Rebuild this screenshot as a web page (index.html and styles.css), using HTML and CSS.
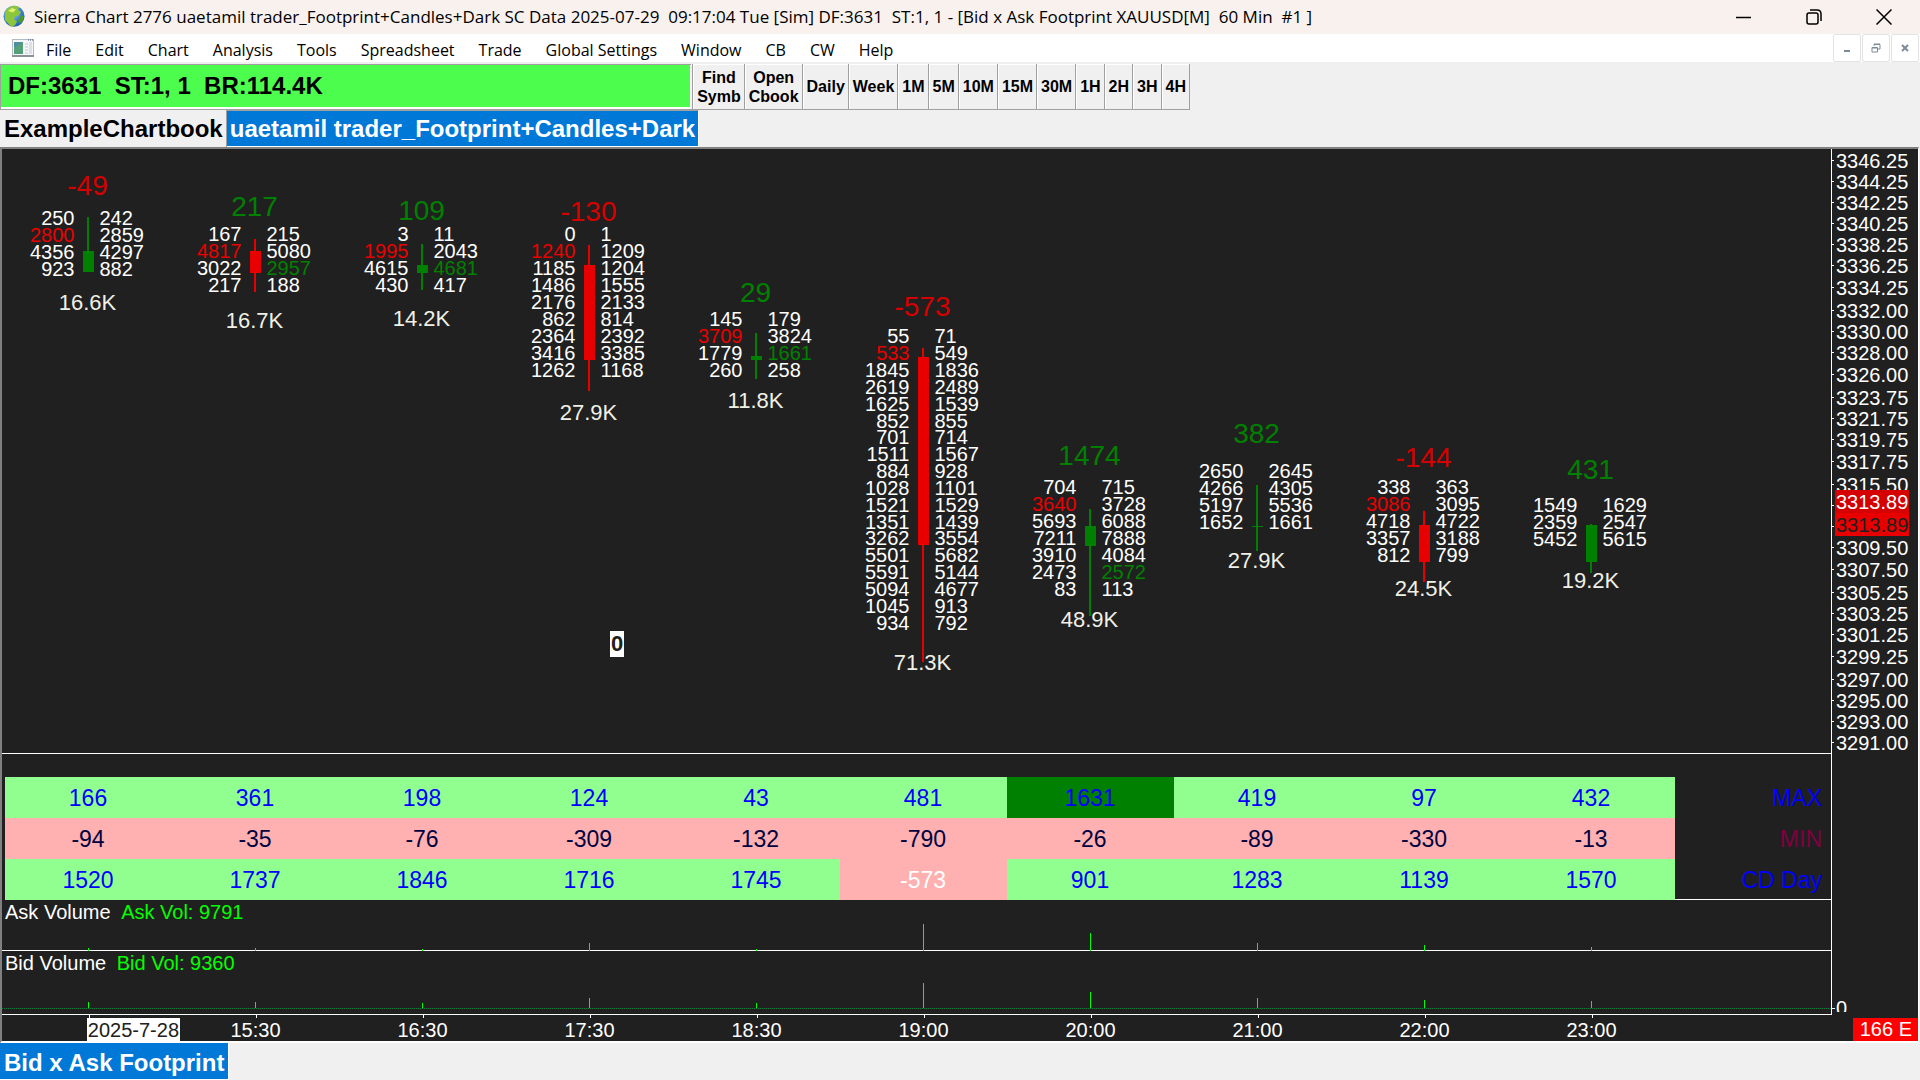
FILE: index.html
```html
<!DOCTYPE html>
<html lang="en">
  <head>
    <title>Sierra Chart</title>
    <meta charset="utf-8" />
    <meta name="viewport" content="width=device-width, initial-scale=1" />
    <link rel="stylesheet" href="styles.css">
  </head>
  <body>
    <header class="titlebar">
      <svg class="globe" viewBox="0 0 22 32" preserveAspectRatio="none">
        <defs>
          <radialGradient id="sea" cx="40%" cy="35%" r="70%">
            <stop offset="0" stop-color="#8fd0ff"/>
            <stop offset="1" stop-color="#1457a8"/>
          </radialGradient>
        </defs>
        <ellipse cx="11" cy="15" rx="10.5" ry="14" fill="url(#sea)"/>
        <path d="M2 10C4 4 8 1 12 1l4 2-1 4 3 2-2 5-4 1-1 4 3 3-2 5-4 2-3-5-3-4z" fill="#8ec63a"/>
        <path d="M5 8l4-4 4 2-3 4z" fill="#e2ee72"/>
        <path d="M17 15l4-1-1 7-3 4-2-4z" fill="#4c9b2e"/>
      </svg>
      <h1>Sierra Chart 2776 uaetamil trader_Footprint+Candles+Dark SC Data 2025-07-29&nbsp; 09:17:04 Tue [Sim] DF:3631&nbsp; ST:1, 1 - [Bid x Ask Footprint XAUUSD[M]&nbsp; 60 Min&nbsp; #1 ]</h1>
      <div class="window-buttons">
        <button aria-label="Minimize"><svg width="16" height="16" viewBox="0 0 16 16"><path d="M0 8.500h15"/></svg></button>
        <button aria-label="Restore"><svg width="16" height="16" viewBox="0 0 16 16"><rect x="1" y="4" width="11" height="11" rx="2"/><path d="M4 1h7q4 0 4 4v7"/></svg></button>
        <button aria-label="Close"><svg width="16" height="16" viewBox="0 0 16 16"><path d="M.5.5l15 15M15.500.5l-15 15"/></svg></button>
      </div>
    </header>

    <nav class="menubar">
      <svg class="doc-icon" width="22" height="18" viewBox="0 0 22 18">
        <rect x="0.500" y="0.500" width="21" height="16" fill="#f4f6f8" stroke="#b4bac2"/>
        <path d="M0 17h22" stroke="#8b9199" stroke-width="2"/>
        <rect x="2" y="3" width="9" height="12" fill="#4d8fa0"/>
        <path d="M2 15V9l9-6v12z" fill="#55a078"/>
        <path d="M13 5h3M13 8h3M13 11h3M13 14h3" stroke="#c3c8cf"/>
        <rect x="17" y="3" width="3" height="12" fill="#dde1e6"/>
        <path d="M16 1h1M18 1h1M20 1h1" stroke="#3b5d88"/>
      </svg>
      <a href="#">File</a>
      <a href="#">Edit</a>
      <a href="#">Chart</a>
      <a href="#">Analysis</a>
      <a href="#">Tools</a>
      <a href="#">Spreadsheet</a>
      <a href="#">Trade</a>
      <a href="#">Global Settings</a>
      <a href="#">Window</a>
      <a href="#">CB</a>
      <a href="#">CW</a>
      <a href="#">Help</a>
      <div class="child-buttons">
        <button aria-label="Minimize chart"><svg width="10" height="10" viewBox="0 0 10 10"><path d="M2 8h6" stroke-width="2"/></svg></button>
        <button aria-label="Restore chart"><svg width="10" height="10" viewBox="0 0 10 10"><path d="M3 3V1.500h6V6H7M3 1h6M1 4.500h5.500V9H1zM1 5h5"/></svg></button>
        <button aria-label="Close chart"><svg width="10" height="10" viewBox="0 0 10 10"><path d="M2 2l6 6M8 2l-6 6" stroke-width="2"/></svg></button>
      </div>
    </nav>

    <div class="toolbar">
      <div class="status">DF:3631&nbsp; ST:1, 1&nbsp; BR:114.4K</div>
      <button>Find<br>Symb</button>
      <button>Open<br>Cbook</button>
      <button>Daily</button>
      <button>Week</button>
      <button>1M</button>
      <button>5M</button>
      <button>10M</button>
      <button>15M</button>
      <button>30M</button>
      <button>1H</button>
      <button>2H</button>
      <button>3H</button>
      <button>4H</button>
    </div>

    <div class="tabs">
      <button>ExampleChartbook</button>
      <button class="active">uaetamil trader_Footprint+Candles+Dark</button>
    </div>

    <main class="chart">
      <div class="panes">
        <div class="plots">
          <!-- footprint bars: top/height come from the price scale -->
          <section class="price">
            <div class="bar">
              <i class="wick up" style="top:68px;height:34px"></i>
              <i class="body up" style="top:102px;height:21px"></i>
              <span class="delta neg" style="top:20px">-49</span>
              <table class="levels" style="top:60px;height:67px">
                <tr><td>250</td><td>242</td></tr>
                <tr><td class="sell">2800</td><td>2859</td></tr>
                <tr><td>4356</td><td>4297</td></tr>
                <tr><td>923</td><td>882</td></tr>
              </table>
              <span class="total" style="top:140px">16.6K</span>
            </div>
            <div class="bar">
              <i class="wick down" style="top:90px;height:53px"></i>
              <i class="body down" style="top:102px;height:22px"></i>
              <span class="delta" style="top:41px">217</span>
              <table class="levels" style="top:76px;height:67px">
                <tr><td>167</td><td>215</td></tr>
                <tr><td class="sell">4817</td><td>5080</td></tr>
                <tr><td>3022</td><td class="buy">2957</td></tr>
                <tr><td>217</td><td>188</td></tr>
              </table>
              <span class="total" style="top:158px">16.7K</span>
            </div>
            <div class="bar">
              <i class="wick up" style="top:95px;height:46px"></i>
              <i class="body up" style="top:116px;height:8px"></i>
              <span class="delta" style="top:45px">109</span>
              <table class="levels" style="top:76px;height:67px">
                <tr><td>3</td><td>11</td></tr>
                <tr><td class="sell">1995</td><td>2043</td></tr>
                <tr><td>4615</td><td class="buy">4681</td></tr>
                <tr><td>430</td><td>417</td></tr>
              </table>
              <span class="total" style="top:156px">14.2K</span>
            </div>
            <div class="bar">
              <i class="wick down" style="top:96px;height:146px"></i>
              <i class="body down" style="top:116px;height:95px"></i>
              <span class="delta neg" style="top:46px">-130</span>
              <table class="levels" style="top:76px;height:152px">
                <tr><td>0</td><td>1</td></tr>
                <tr><td class="sell">1240</td><td>1209</td></tr>
                <tr><td>1185</td><td>1204</td></tr>
                <tr><td>1486</td><td>1555</td></tr>
                <tr><td>2176</td><td>2133</td></tr>
                <tr><td>862</td><td>814</td></tr>
                <tr><td>2364</td><td>2392</td></tr>
                <tr><td>3416</td><td>3385</td></tr>
                <tr><td>1262</td><td>1168</td></tr>
              </table>
              <span class="total" style="top:250px">27.9K</span>
            </div>
            <div class="bar">
              <i class="wick up" style="top:184px;height:46px"></i>
              <i class="body up" style="top:207px;height:4px"></i>
              <span class="delta" style="top:127px">29</span>
              <table class="levels" style="top:161px;height:67px">
                <tr><td>145</td><td>179</td></tr>
                <tr><td class="sell">3709</td><td>3824</td></tr>
                <tr><td>1779</td><td class="buy">1661</td></tr>
                <tr><td>260</td><td>258</td></tr>
              </table>
              <span class="total" style="top:238px">11.8K</span>
            </div>
            <div class="bar">
              <i class="wick down" style="top:199px;height:314px"></i>
              <i class="body down" style="top:208px;height:188px"></i>
              <span class="delta neg" style="top:141px">-573</span>
              <table class="levels" style="top:178px;height:303px">
                <tr><td>55</td><td>71</td></tr>
                <tr><td class="sell">533</td><td>549</td></tr>
                <tr><td>1845</td><td>1836</td></tr>
                <tr><td>2619</td><td>2489</td></tr>
                <tr><td>1625</td><td>1539</td></tr>
                <tr><td>852</td><td>855</td></tr>
                <tr><td>701</td><td>714</td></tr>
                <tr><td>1511</td><td>1567</td></tr>
                <tr><td>884</td><td>928</td></tr>
                <tr><td>1028</td><td>1101</td></tr>
                <tr><td>1521</td><td>1529</td></tr>
                <tr><td>1351</td><td>1439</td></tr>
                <tr><td>3262</td><td>3554</td></tr>
                <tr><td>5501</td><td>5682</td></tr>
                <tr><td>5591</td><td>5144</td></tr>
                <tr><td>5094</td><td>4677</td></tr>
                <tr><td>1045</td><td>913</td></tr>
                <tr><td>934</td><td>792</td></tr>
              </table>
              <span class="total" style="top:500px">71.3K</span>
            </div>
            <div class="bar">
              <i class="wick up" style="top:360px;height:107px"></i>
              <i class="body up" style="top:377px;height:20px"></i>
              <span class="delta" style="top:290px">1474</span>
              <table class="levels" style="top:329px;height:118px">
                <tr><td>704</td><td>715</td></tr>
                <tr><td class="sell">3640</td><td>3728</td></tr>
                <tr><td>5693</td><td>6088</td></tr>
                <tr><td>7211</td><td>7888</td></tr>
                <tr><td>3910</td><td>4084</td></tr>
                <tr><td>2473</td><td class="buy">2572</td></tr>
                <tr><td>83</td><td>113</td></tr>
              </table>
              <span class="total" style="top:457px">48.9K</span>
            </div>
            <div class="bar">
              <i class="wick up" style="top:336px;height:66px"></i>
              <i class="body up" style="top:377px;height:1px"></i>
              <span class="delta" style="top:268px">382</span>
              <table class="levels" style="top:313px;height:67px">
                <tr><td>2650</td><td>2645</td></tr>
                <tr><td>4266</td><td>4305</td></tr>
                <tr><td>5197</td><td>5536</td></tr>
                <tr><td>1652</td><td>1661</td></tr>
              </table>
              <span class="total" style="top:398px">27.9K</span>
            </div>
            <div class="bar">
              <i class="wick down" style="top:362px;height:71px"></i>
              <i class="body down" style="top:376px;height:37px"></i>
              <span class="delta neg" style="top:292px">-144</span>
              <table class="levels" style="top:329px;height:84px">
                <tr><td>338</td><td>363</td></tr>
                <tr><td class="sell">3086</td><td>3095</td></tr>
                <tr><td>4718</td><td>4722</td></tr>
                <tr><td>3357</td><td>3188</td></tr>
                <tr><td>812</td><td>799</td></tr>
              </table>
              <span class="total" style="top:426px">24.5K</span>
            </div>
            <div class="bar">
              <i class="wick up" style="top:375px;height:49px"></i>
              <i class="body up" style="top:376px;height:37px"></i>
              <span class="delta" style="top:304px">431</span>
              <table class="levels" style="top:346px;height:51px">
                <tr><td>1549</td><td>1629</td></tr>
                <tr><td>2359</td><td>2547</td></tr>
                <tr><td>5452</td><td>5615</td></tr>
              </table>
              <span class="total" style="top:418px">19.2K</span>
            </div>
            <span class="position">0</span>
          </section>

          <section class="studies">
            <table>
              <colgroup><col span="10"><col class="label-col"></colgroup>
              <tr class="max">
                <td>166</td><td>361</td><td>198</td><td>124</td><td>43</td><td>481</td><td class="peak">1631</td><td>419</td><td>97</td><td>432</td>
                <th scope="row">MAX</th>
              </tr>
              <tr class="min">
                <td>-94</td><td>-35</td><td>-76</td><td>-309</td><td>-132</td><td>-790</td><td>-26</td><td>-89</td><td>-330</td><td>-13</td>
                <th scope="row">MIN</th>
              </tr>
              <tr class="day">
                <td>1520</td><td>1737</td><td>1846</td><td>1716</td><td>1745</td><td class="below">-573</td><td>901</td><td>1283</td><td>1139</td><td>1570</td>
                <th scope="row">CD Day</th>
              </tr>
            </table>
          </section>

          <section class="volume ask">
            <h2>Ask Volume <span>Ask Vol: 9791</span></h2>
            <div class="columns">
              <i style="height:3px"></i><i style="height:3px"></i><i style="height:2px"></i><i style="height:8px"></i><i style="height:2px"></i>
              <i style="height:27px"></i><i style="height:18px"></i><i style="height:8px"></i><i style="height:6px"></i><i style="height:4px"></i>
            </div>
          </section>

          <section class="volume bid">
            <h2>Bid Volume <span>Bid Vol: 9360</span></h2>
            <div class="columns">
              <i style="height:6px"></i><i style="height:6px"></i><i style="height:5px"></i><i style="height:10px"></i><i style="height:5px"></i>
              <i style="height:25px"></i><i style="height:16px"></i><i style="height:10px"></i><i style="height:8px"></i><i style="height:7px"></i>
            </div>
          </section>
        </div>

        <aside class="scale">
          <ol>
            <li style="top:1px">3346.25</li>
            <li style="top:22px">3344.25</li>
            <li style="top:43px">3342.25</li>
            <li style="top:64px">3340.25</li>
            <li style="top:85px">3338.25</li>
            <li style="top:106px">3336.25</li>
            <li style="top:128px">3334.25</li>
            <li style="top:151px">3332.00</li>
            <li style="top:172px">3330.00</li>
            <li style="top:193px">3328.00</li>
            <li style="top:215px">3326.00</li>
            <li style="top:238px">3323.75</li>
            <li style="top:259px">3321.75</li>
            <li style="top:280px">3319.75</li>
            <li style="top:302px">3317.75</li>
            <li style="top:325px">3315.50</li>
            <li style="top:346px"></li>
            <li style="top:367px"></li>
            <li style="top:388px">3309.50</li>
            <li style="top:410px">3307.50</li>
            <li style="top:433px">3305.25</li>
            <li style="top:454px">3303.25</li>
            <li style="top:475px">3301.25</li>
            <li style="top:497px">3299.25</li>
            <li style="top:520px">3297.00</li>
            <li style="top:541px">3295.00</li>
            <li style="top:562px">3293.00</li>
            <li style="top:583px">3291.00</li>
          </ol>
          <span class="last" style="top:341px">3313.89</span>
          <span class="last close" style="top:364px">3313.89</span>
          <span class="zero">0</span>
        </aside>
      </div>

      <footer class="timeline">
        <ol>
          <li class="date"><span>2025-7-28</span></li>
          <li>15:30</li>
          <li>16:30</li>
          <li>17:30</li>
          <li>18:30</li>
          <li>19:00</li>
          <li>20:00</li>
          <li>21:00</li>
          <li>22:00</li>
          <li>23:00</li>
        </ol>
        <div class="corner"><span class="countdown">166 E</span></div>
      </footer>
    </main>

    <div class="tabs bottom">
      <button class="active">Bid x Ask Footprint</button>
    </div>
  </body>
</html>
```
FILE: styles.css
```css
* {
  box-sizing: border-box;
}

body {
  margin: 0;
  height: 100vh;
  display: flex;
  flex-direction: column;
  overflow: hidden;
  background-color: #f0f0f0;
  color: #000000;
  font-family: "Liberation Sans", Arial, sans-serif;
  font-size: 20px;
}

h1, h2, ol {
  margin: 0;
  padding: 0;
  font-weight: normal;
  list-style: none;
}

button {
  border: 0;
  padding: 0;
  background: none;
  color: inherit;
  font-family: inherit;
}

/* title bar */
.titlebar {
  height: 34px;
  flex: none;
  display: flex;
  align-items: center;
  padding: 0 1px 0 3px;
  background-color: #f9f1ee;
}

.globe {
  width: 22px;
  height: 24px;
  flex: none;
}

.titlebar h1 {
  flex: 1;
  padding-left: 9px;
  font-family: "Open Sans", sans-serif;
  font-size: 17px;
  line-height: 34px;
  white-space: nowrap;
}

.window-buttons {
  display: flex;
}

.window-buttons button {
  width: 70px;
  height: 34px;
  display: flex;
  align-items: center;
  justify-content: center;
}

.window-buttons svg {
  fill: none;
  stroke: #000000;
  stroke-width: 1.5;
}

/* menu */
.menubar {
  height: 28px;
  flex: none;
  display: flex;
  align-items: center;
  padding: 0 1px 0 12px;
  background-color: #ffffff;
  font-family: "Open Sans", sans-serif;
  font-size: 16px;
}

.menubar a {
  padding: 3px 12px 0;
  color: #000000;
  line-height: 28px;
  text-decoration: none;
  white-space: nowrap;
}

.child-buttons {
  margin-left: auto;
  display: flex;
  gap: 1px;
}

.child-buttons button {
  width: 28px;
  height: 28px;
  display: flex;
  align-items: center;
  justify-content: center;
  border: 1px solid #e3e3e3;
  border-radius: 2px;
}

.child-buttons svg {
  fill: none;
  stroke: #7d8a99;
}

/* toolbar */
.toolbar {
  height: 46px;
  margin-top: 2px;
  flex: none;
  display: flex;
  align-self: flex-start;
  border-bottom: 1px solid #a0a0a0;
}

.status {
  width: 36vw;
  margin-right: 1px;
  padding-left: 7px;
  border: solid #a0a0a0;
  border-width: 1px 0 0 1px;
  box-shadow: inset -1px -2px #ffffff;
  background-color: #4dfd4d;
  font-size: 24px;
  font-weight: bold;
  line-height: 42px;
}

.toolbar button {
  padding: 0 3px 0 4px;
  border-right: 1px solid #a0a0a0;
  box-shadow: inset 1px 1px #ffffff;
  font-size: 16px;
  font-weight: bold;
  line-height: 19px;
}

.toolbar .status + button {
  border-left: 1px solid #a0a0a0;
}

/* chart tabs */
.tabs {
  height: 37px;
  flex: none;
  display: flex;
}

.tabs button {
  padding: 0 3px 0 4px;
  border-right: 1px solid #a0a0a0;
  font-size: 24px;
  font-weight: bold;
  line-height: 36px;
}

.tabs .active {
  padding: 0 3px;
  border-top: 1px solid #a0a0a0;
  border-right: 1px solid #ffffff;
  border-bottom: 1px solid #ffffff;
  background-color: #0078d7;
  color: #ffffff;
}

/* chart */
.chart {
  flex: 1;
  display: flex;
  flex-direction: column;
  margin-right: 1px;
  border: solid #808080;
  border-width: 2px 1px 2px 2px;
  border-right-color: #ffffff;
  border-bottom-color: #ffffff;
  background-color: #202020;
  color: #ffffff;
}

.panes {
  flex: 1;
  display: flex;
}

.plots {
  flex: 1;
  display: flex;
  flex-direction: column;
}

.price {
  flex: 1;
  position: relative;
  display: grid;
  grid-template-columns: repeat(10, 1fr);
  padding: 0 157px 0 2px;
  border-bottom: 1px solid #ffffff;
}

.bar {
  position: relative;
}

.wick, .body {
  position: absolute;
  left: 50%;
  width: 2px;
  margin-left: -1px;
}

.body {
  width: 11px;
  margin-left: -5px;
}

.up {
  background-color: #008000;
}

.down {
  background-color: #e80000;
}

.delta, .total {
  position: absolute;
  left: 0;
  width: 100%;
  text-align: center;
}

.delta {
  color: #008000;
  font-size: 28px;
  line-height: 34px;
}

.delta.neg {
  color: #d50000;
}

.total {
  color: #f0f0e6;
  font-size: 22px;
  line-height: 28px;
}

.levels {
  position: absolute;
  left: 0;
  width: 100%;
  margin-top: 1px;
  table-layout: fixed;
  border-collapse: collapse;
  line-height: 16px;
}

.levels td {
  padding: 0 0 0 12px;
}

.levels td:first-child {
  padding: 0 13px 0 0;
  text-align: right;
}

.levels .sell {
  color: #e80000;
}

.levels .buy {
  color: #008000;
}

.position {
  position: absolute;
  left: 608px;
  top: 482px;
  padding: 0 1px;
  background-color: #ffffff;
  color: #202020;
  font-size: 22px;
  font-weight: bold;
  line-height: 26px;
}

/* study grid */
.studies {
  padding: 23px 0 0 3px;
}

.studies table {
  width: 100%;
  table-layout: fixed;
  border-collapse: collapse;
  font-size: 23px;
  text-align: center;
}

.label-col {
  width: 156px;
}

.studies td, .studies th {
  height: 41px;
  padding: 2px 1px 0 0;
  background-color: #90ff90;
  color: #0000ff;
}

.studies th {
  padding-right: 9px;
  background: none;
  font-weight: normal;
  text-align: right;
}

.studies .min td {
  background-color: #ffb0b0;
  color: #000040;
}

.studies .min th {
  color: #800040;
}

.studies .peak {
  background-color: #008000;
}

.studies .day .below {
  background-color: #ffb0b0;
  color: #ffffff;
}

.studies .day th {
  box-shadow: inset 0 -1px #ffffff;
}

/* volume panes */
.volume {
  display: flex;
  flex-direction: column;
  justify-content: space-between;
  height: 51px;
  border-bottom: 1px solid #ffffff;
}

.volume h2 {
  height: 23px;
  padding-left: 3px;
  font-size: 20px;
  line-height: 24px;
}

.volume h2 span {
  padding-left: 5px;
  color: #00ff00;
}

.columns {
  display: grid;
  grid-template-columns: repeat(10, 1fr);
  align-items: end;
  justify-items: center;
  margin-bottom: -1px;
  padding: 0 156px 0 3px;
}

.columns i {
  width: 1px;
  background-color: #00ff00;
}

.bid {
  height: 64px;
}

.bid .columns {
  margin-bottom: 5px;
  border-bottom: 1px dotted #008040;
}

/* price scale */
.scale {
  position: relative;
  width: 87px;
  border-left: 1px solid #ffffff;
}

.scale li {
  position: absolute;
  left: 0;
  height: 21px;
  padding-left: 4px;
  line-height: 23px;
}

.scale li::before {
  content: "";
  position: absolute;
  left: 0;
  top: 10px;
  width: 2px;
  height: 1px;
  background-color: #ffffff;
}

.last {
  position: absolute;
  left: 3px;
  height: 23px;
  padding: 0 1px;
  background-color: #d50000;
  line-height: 24px;
}

.last.close {
  background-color: #e80000;
  color: #202020;
}

.zero {
  position: absolute;
  left: 0;
  bottom: 3px;
  height: 12px;
  padding-left: 4px;
  overflow: hidden;
  line-height: 17px;
}

.zero::before {
  content: "";
  position: absolute;
  left: 0;
  top: 8px;
  width: 3px;
  height: 1px;
  background-color: #ffffff;
}

/* time axis, same columns as the panes above */
.timeline {
  height: 26px;
  display: flex;
}

.timeline ol {
  flex: 1;
  display: grid;
  grid-template-columns: repeat(10, minmax(0, 1fr));
  padding: 0 156px 0 3px;
}

.timeline li {
  position: relative;
  padding-top: 3px;
  line-height: 24px;
  text-align: center;
  white-space: nowrap;
}

.timeline li::before {
  content: "";
  position: absolute;
  left: 50%;
  top: 0;
  width: 1px;
  height: 3px;
  background-color: #ffffff;
}

.timeline .date {
  padding-left: 49%;
  text-align: left;
}

.date span {
  display: inline-block;
  height: 23px;
  padding: 0 1px;
  background-color: #ffffff;
  color: #202020;
}

.corner {
  width: 87px;
  display: flex;
  align-items: flex-end;
  justify-content: flex-end;
}

.countdown {
  padding: 0 6px 0 7px;
  background-color: #ff0000;
  line-height: 23px;
}

.bottom .active {
  padding: 2px 4px 0;
  border-top: 0;
}
```
